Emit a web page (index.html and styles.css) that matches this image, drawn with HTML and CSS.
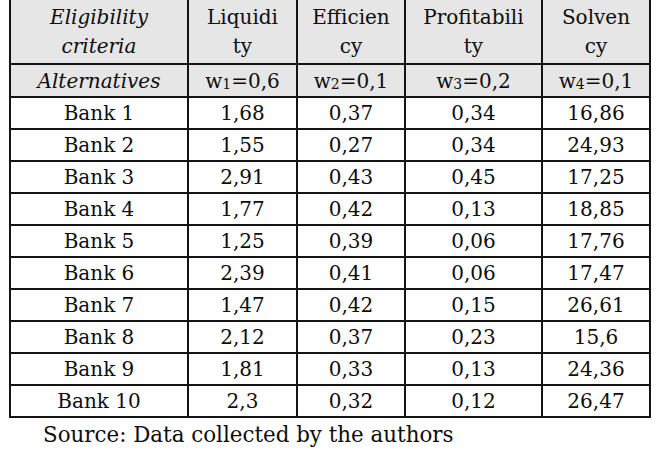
FILE: index.html
```html
<!DOCTYPE html>
<html>
<head>
<meta charset="utf-8">
<link rel="stylesheet" href="styles.css">
</head>
<body>
<table class="data">
  <colgroup>
    <col class="c1"><col class="c2"><col class="c3"><col class="c4"><col class="c5">
  </colgroup>
  <tr class="head1">
    <th class="it">Eligibility<br>criteria</th>
    <th>Liquidi<br>ty</th>
    <th>Efficien<br>cy</th>
    <th>Profitabili<br>ty</th>
    <th>Solven<br>cy</th>
  </tr>
  <tr class="head2">
    <th class="it">Alternatives</th>
    <th>w<sub>1</sub>=0,6</th>
    <th>w<sub>2</sub>=0,1</th>
    <th>w<sub>3</sub>=0,2</th>
    <th>w<sub>4</sub>=0,1</th>
  </tr>
  <tr><td>Bank 1</td><td>1,68</td><td>0,37</td><td>0,34</td><td>16,86</td></tr>
  <tr><td>Bank 2</td><td>1,55</td><td>0,27</td><td>0,34</td><td>24,93</td></tr>
  <tr><td>Bank 3</td><td>2,91</td><td>0,43</td><td>0,45</td><td>17,25</td></tr>
  <tr><td>Bank 4</td><td>1,77</td><td>0,42</td><td>0,13</td><td>18,85</td></tr>
  <tr><td>Bank 5</td><td>1,25</td><td>0,39</td><td>0,06</td><td>17,76</td></tr>
  <tr><td>Bank 6</td><td>2,39</td><td>0,41</td><td>0,06</td><td>17,47</td></tr>
  <tr><td>Bank 7</td><td>1,47</td><td>0,42</td><td>0,15</td><td>26,61</td></tr>
  <tr><td>Bank 8</td><td>2,12</td><td>0,37</td><td>0,23</td><td>15,6</td></tr>
  <tr><td>Bank 9</td><td>1,81</td><td>0,33</td><td>0,13</td><td>24,36</td></tr>
  <tr><td>Bank 10</td><td>2,3</td><td>0,32</td><td>0,12</td><td>26,47</td></tr>
</table>
<p class="source">Source: Data collected by the authors</p>
</body>
</html>
```
FILE: styles.css
```css
html, body {
  margin: 0;
  padding: 0;
  background: #ffffff;
}
body {
  font-family: "DejaVu Serif", "Liberation Serif", serif;
  font-size: 20px;
  color: #0d0d0d;
  overflow: hidden;
}
.data {
  border-collapse: collapse;
  table-layout: fixed;
  width: 642px;
  margin: -2px 0 0 9px;
}
.c1 { width: 178px; }
.c2 { width: 109px; }
.c3 { width: 108px; }
.c4 { width: 137px; }
.c5 { width: 108px; }
.data th, .data td {
  border: 2px solid #141414;
  text-align: center;
  vertical-align: middle;
  padding: 0;
  font-weight: normal;
  line-height: 29px;
}
.data th {
  background: #e6e6e6;
}
.head1 th { height: 63px; }
.head2 th { height: 31px; line-height: 30px; }
.data td { height: 30px; }
.it { font-style: italic; }
sub {
  font-size: 14px;
  vertical-align: -1px;
  line-height: 0;
}
.source {
  margin: 0;
  padding: 2px 0 0 43px;
  line-height: 30px;
  font-size: 21.4px;
}
```
